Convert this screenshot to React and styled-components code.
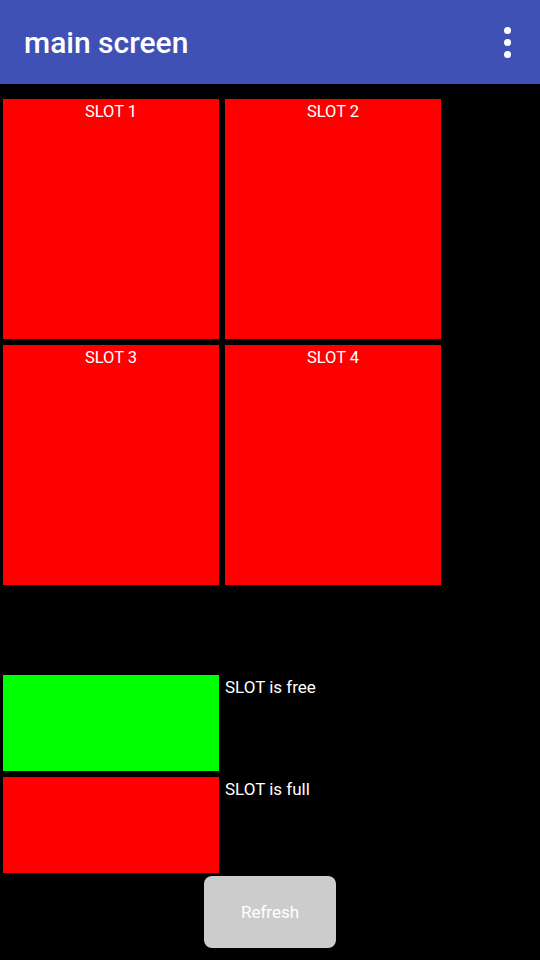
import React from 'react';
import styled, { createGlobalStyle } from 'styled-components';

const GlobalStyle = createGlobalStyle`
    html, body {
        margin: 0;
        padding: 0;
        background: #000;
        font-family: Roboto, "Noto Sans", sans-serif;
    }
`;

const Screen = styled.div`
    width: 540px;
    height: 960px;
    background: #000;
    overflow: hidden;
    display: flex;
    flex-direction: column;
`;

const AppBar = styled.header`
    height: 84px;
    flex-shrink: 0;
    background: #3f51b5;
    display: flex;
    align-items: center;
    justify-content: space-between;
    padding: 0 23px 0 24px;
    box-sizing: border-box;

    h1 {
        margin: 0;
        color: #fff;
        font-size: 30px;
        font-weight: 500;
    }
`;

const MenuButton = styled.div`
    display: flex;
    flex-direction: column;
    gap: 5px;
    padding: 6px;

    span {
        width: 7px;
        height: 7px;
        border-radius: 50%;
        background: #fff;
    }
`;

const Content = styled.main`
    padding: 15px 3px 0;
    display: flex;
    flex-direction: column;
`;

const SlotGrid = styled.div`
    display: grid;
    grid-template-columns: 216px 216px;
    grid-auto-rows: 240px;
    gap: 6px;
`;

const Slot = styled.div`
    background: ${({ $free }) => ($free ? '#00ff00' : '#ff0000')};
    color: #fff;
    font-size: 16.5px;
    text-align: center;
    padding-top: 3px;
`;

const Legend = styled.div`
    margin-top: 90px;
    display: flex;
    flex-direction: column;
    gap: 6px;
`;

const LegendRow = styled.div`
    display: flex;
    gap: 6px;
`;

const Swatch = styled.div`
    width: 216px;
    height: 96px;
    background: ${({ $color }) => $color};
`;

const LegendText = styled.span`
    color: #fff;
    font-size: 17px;
    padding-top: 2px;
`;

const RefreshButton = styled.button`
    align-self: center;
    margin-top: 3px;
    width: 132px;
    height: 72px;
    border: none;
    border-radius: 8px;
    background: #cccccc;
    color: #fff;
    font-family: Roboto, "Noto Sans", sans-serif;
    font-size: 17px;
`;

const slots = ['SLOT 1', 'SLOT 2', 'SLOT 3', 'SLOT 4'];

export default function App() {
    return (
        <>
            <GlobalStyle />
            <Screen>
                <AppBar>
                    <h1>main screen</h1>
                    <MenuButton>
                        <span />
                        <span />
                        <span />
                    </MenuButton>
                </AppBar>
                <Content>
                    <SlotGrid>
                        {slots.map((name) => (
                            <Slot key={name}>{name}</Slot>
                        ))}
                    </SlotGrid>
                    <Legend>
                        <LegendRow>
                            <Swatch $color="#00ff00" />
                            <LegendText>SLOT is free</LegendText>
                        </LegendRow>
                        <LegendRow>
                            <Swatch $color="#ff0000" />
                            <LegendText>SLOT is full</LegendText>
                        </LegendRow>
                    </Legend>
                    <RefreshButton>Refresh</RefreshButton>
                </Content>
            </Screen>
        </>
    );
}
